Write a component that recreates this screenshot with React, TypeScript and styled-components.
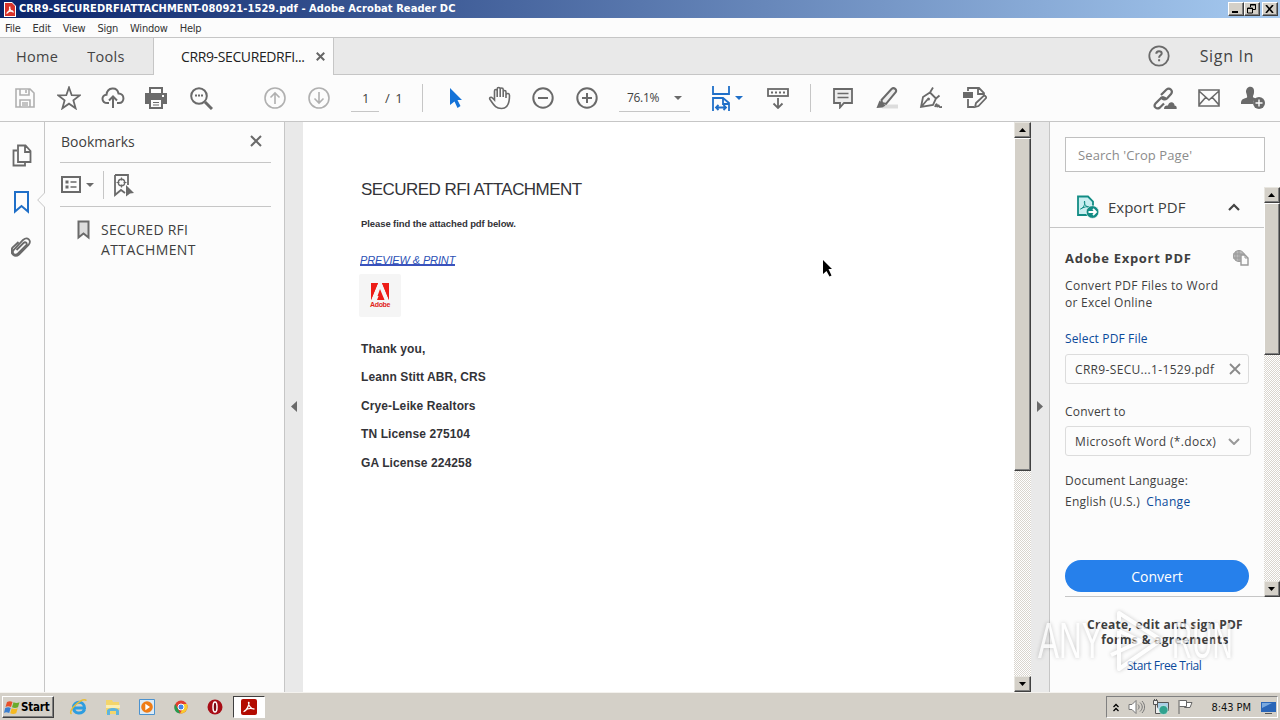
import React from "react";
import styled, { createGlobalStyle, css } from "styled-components";

const GlobalStyle = createGlobalStyle`
* { box-sizing: border-box; }
body {
  margin: 0;
  overflow: hidden;
  background: #fcfcfc;
  font-family: "Open Sans", "Noto Sans", sans-serif;
  color: #3f3f3f;
}
`

const Window = styled.div`
position: relative;
width: 1280px;
height: 720px;
display: flex;
flex-direction: column;
overflow: hidden;
svg { display: block; flex: none; }
`

const Label = styled.span<{ $spacing?: number }>`
letter-spacing: ${(p) => p.$spacing ?? 0}px;
white-space: nowrap;
`

/* title bar and menus */
const TitleBar = styled.header`
height: 18px;
flex: none;
display: flex;
align-items: center;
padding: 0 2px 0 4px;
background: linear-gradient(90deg, #0a246a, #a6caf0);
`
const WindowTitle = styled.h1`
margin: 0 auto 0 3px;
font: bold 11px/18px "DejaVu Sans Condensed", sans-serif;
color: #fff;
white-space: nowrap;
`
const raised = css`
background: #d4d0c8;
border: 1px solid;
border-color: #fff #404040 #404040 #fff;
box-shadow: inset -1px -1px #808080;
`
const WindowButton = styled.button<{ $gap?: boolean }>`
${raised}
width: 16px;
height: 14px;
padding: 0;
margin-left: ${(p) => (p.$gap ? 2 : 0)}px;
display: grid;
place-items: center;
`
const MenuBar = styled.nav`
height: 20px;
flex: none;
display: flex;
gap: 12px;
padding-left: 5px;
border-bottom: 1px solid #c6c6c6;
font: 11px/21px "DejaVu Sans Condensed", sans-serif;
color: #333;
`

/* tabs */
const TabBar = styled.div`
height: 37px;
flex: none;
display: flex;
background: #e9e9e9;
font-size: 14.5px;
line-height: 37px;
color: #444;
`
const TabLinks = styled.div`
width: 154px;
display: flex;
gap: 29px;
padding-left: 16px;
border-right: 1px solid #c6c6c6;
border-bottom: 1px solid #c6c6c6;
`
const ActiveTab = styled.div`
width: 179px;
display: flex;
align-items: center;
justify-content: space-between;
padding: 0 8px 0 27px;
background: #fcfcfc;
font-size: 14px;
color: #222;
`
const TabRest = styled.div`
flex: 1;
display: flex;
align-items: center;
justify-content: flex-end;
gap: 30px;
padding-right: 26px;
border-left: 1px solid #c6c6c6;
border-bottom: 1px solid #c6c6c6;
font-size: 16px;
`

/* toolbar */
const Toolbar = styled.div`
height: 47px;
flex: none;
display: flex;
align-items: center;
padding-left: 3px;
border-bottom: 1px solid #c6c6c6;
font-size: 13px;
`
const Tool = styled.div<{ $width?: number }>`
width: ${(p) => p.$width ?? 44}px;
flex: none;
display: flex;
align-items: center;
justify-content: center;
gap: 4px;
`
const Spacer = styled.div<{ $width: number }>`
width: ${(p) => p.$width}px;
flex: none;
`
const Field = styled.div<{ $width: number }>`
width: ${(p) => p.$width}px;
height: 28px;
display: flex;
align-items: center;
justify-content: space-between;
padding: 0 8px;
border-bottom: 1px solid #c6c6c6;
font-size: 12px;
`
const PageNumber = styled(Field)`
padding-left: 11px;
font-size: 13px;
`
const PageTotal = styled.span`
width: 27px;
padding-left: 6px;
font-size: 13px;
`
const Divider = styled.div`
width: 1px;
height: 28px;
background: #c6c6c6;
`

/* main area */
const Main = styled.main`
height: 570px;
flex: none;
display: flex;
`
const Rail = styled.aside`
position: relative;
width: 45px;
display: flex;
flex-direction: column;
align-items: center;
gap: 22px;
padding: 22px 0 0;
border-right: 1px solid #c6c6c6;
`
const RailNotch = styled.div`
position: absolute;
top: 70px;
right: -1px;
`
const BookmarkPanel = styled.section`
width: 240px;
padding: 0 13px 0 15px;
border-right: 1px solid #c6c6c6;
font-size: 14px;
`
const PanelHeader = styled.div`
height: 41px;
display: flex;
align-items: center;
justify-content: space-between;
padding: 0 9px 2px 1px;
border-bottom: 1px solid #c6c6c6;
`
const PanelTools = styled.div`
height: 44px;
display: flex;
align-items: center;
border-bottom: 1px solid #c6c6c6;
> :first-child { margin-left: 1px; }
> :nth-child(2) { margin: 0 9px 0 5px; }
> :nth-child(4) { margin-left: 8px; }
`
const BookmarkItem = styled.div`
display: flex;
gap: 11px;
padding: 13px 0 0 17px;
line-height: 20px;
> svg { margin-top: 0; }
`
const Splitter = styled.div`
width: 18px;
display: grid;
place-items: center;
padding-bottom: 2px;
background: #e9e9e9;
`
const Page = styled.article`
width: 711px;
padding: 57px 0 0 58px;
background: #fff;
font-family: "Liberation Sans", Arial, sans-serif;
color: #333338;
`
const PageTitle = styled.h2`
margin: 0;
font-size: 17px;
line-height: 22px;
font-weight: 400;
`
const PageNote = styled.p`
margin: 15px 0 0;
font-size: 9.5px;
line-height: 16px;
font-weight: 700;
`
const PageLink = styled.a`
display: block;
width: fit-content;
height: 12px;
margin: 22px 0 0 -1px;
font-size: 11px;
line-height: 12px;
font-style: italic;
color: #2b50b5;
border-bottom: 2px solid #3a52bd;
`
const AdobeTile = styled.div`
width: 42px;
height: 43px;
margin: 8px 0 0 -2px;
display: flex;
flex-direction: column;
align-items: center;
padding-top: 9px;
border-radius: 2px;
background: #f5f5f5;
font-size: 7px;
line-height: 9px;
font-weight: 700;
color: #e1251b;
`
const Signature = styled.div`
margin-top: 17.500px;
font-size: 12px;
font-weight: 700;
line-height: 28.5px;
`

/* classic scroll bars */
const ScrollTrack = styled.div<{ $width: number }>`
width: ${(p) => p.$width}px;
display: flex;
flex-direction: column;
background: repeating-conic-gradient(#fff 0 25%, #d9d5ce 0 50%) 0 0 / 2px 2px;
`
const ScrollButton = styled.div`
${raised}
height: 16px;
flex: none;
display: grid;
place-items: center;
border-color: #e8e6e0 #404040 #404040 #e8e6e0;
`
const ScrollThumb = styled.div<{ $height: number }>`
${raised}
height: ${(p) => p.$height}px;
margin-bottom: auto;
`

/* tool pane */
const ToolPane = styled.aside`
width: 231px;
border-left: 1px solid #c6c6c6;
`
const Search = styled.div`
width: 200px;
height: 35px;
margin: 15px 0 15px 15px;
padding-left: 12px;
border: 1px solid #c0c0c0;
background: #fff;
font-size: 13px;
line-height: 34px;
color: #8c8c8c;
`
const PaneScroll = styled.div`
height: 410px;
display: flex;
`
const PaneBody = styled.div`
width: 214px;
display: flex;
flex-direction: column;
`
const ExportHeader = styled.div`
height: 41px;
flex: none;
display: flex;
align-items: center;
padding: 0 24px 0 26px;
border-bottom: 1px solid #c6c6c6;
font-size: 15px;
> span { margin: 0 auto 0 9px; }
`
const ExportForm = styled.div`
flex: 1;
margin-left: 15px;
padding-top: 20px;
border-bottom: 1px solid #c6c6c6;
font-size: 12px;
line-height: 17px;
`
const ExportTitle = styled.h3`
margin: 0 15px 9px 0;
display: flex;
align-items: center;
justify-content: space-between;
font-size: 13px;
line-height: 20px;
`
const Line = styled.div<{ $top?: number }>`
margin-top: ${(p) => p.$top ?? 0}px;
white-space: nowrap;
`
const BlueLink = styled.a`
color: #0b4a9b;
`
const Input = styled.div<{ $width: number; $top: number }>`
width: ${(p) => p.$width}px;
height: 30px;
margin-top: ${(p) => p.$top}px;
padding: 0 7px 0 9px;
display: flex;
align-items: center;
justify-content: space-between;
border: 1px solid #dcdcdc;
border-radius: 3px;
`
const ConvertButton = styled.button`
display: block;
width: 184px;
height: 32px;
margin-top: 50px;
padding: 0;
border: 0;
border-radius: 16px;
background: #2680eb;
color: #fff;
font: 14px "Open Sans", sans-serif;
`
const Promo = styled.div`
padding: 20px 0 0;
font-size: 12px;
line-height: 15px;
text-align: center;
font-weight: 700;
> a { display: block; margin: 11px 2px 0 0; font-weight: 400; }
`

/* taskbar */
const Taskbar = styled.footer`
height: 28px;
flex: none;
display: flex;
align-items: center;
padding: 1px 2px 0;
border-top: 1px solid #f4f2ee;
background: #d4d0c8;
`
const StartButton = styled.button`
${raised}
width: 52px;
height: 22px;
padding: 0 0 0 1px;
display: flex;
align-items: center;
gap: 0;
font: bold 11.5px "DejaVu Sans Condensed", sans-serif;
letter-spacing: -.2px;
`
const QuickLaunch = styled.div`
display: flex;
align-items: center;
gap: 14px;
margin: 0 8px 0 15px;
`
const TaskButton = styled.div`
width: 32px;
height: 22px;
display: grid;
place-items: center;
background: #fff;
border: 1px solid;
border-color: #404040 #fff #fff #404040;
`
const Tray = styled.div`
width: 172px;
height: 22px;
margin-left: auto;
display: flex;
align-items: center;
padding: 0 1px 0 5px;
border: 1px solid;
border-color: #808080 #fff #fff #808080;
font: 11px "DejaVu Sans Condensed", sans-serif;
color: #111;
> svg + svg { margin-left: 8px; }
> span { margin: 0 10px 0 auto; }
`

/* things floating over the window */
const Pointer = styled.div`
position: absolute;
left: 822px;
top: 260px;
`
const Watermark = styled.div`
position: absolute;
left: 1038px;
top: 608px;
width: 196px;
height: 66px;
display: flex;
align-items: center;
justify-content: space-between;
opacity: .72;
filter: drop-shadow(0 0 2px rgba(0, 0, 0, .28));
font: 50px/66px "Liberation Sans", Arial, sans-serif;
color: #fff;
`
const MarkWord = styled.span<{ $scale: number }>`
display: block;
width: 62px;
white-space: nowrap;
transform: scaleX(${(p) => p.$scale});
transform-origin: 0 0;
`

type IconProps = {
  w?: number;
  h?: number;
  box?: string;
  color?: string;
  stroke?: number;
  children: React.ReactNode;
};

const Icon = ({ w = 24, h = w, box, color = "#6a6a6a", stroke = 1.8, children }: IconProps) => (
  <svg width={w} height={h} viewBox={box ?? `0 0 ${w} ${h}`} fill="none" stroke={color} strokeWidth={stroke}>
    {children}
  </svg>
);

const Caret = ({ color = "#6a6a6a" }: { color?: string }) => (
  <Icon w={8} h={4} stroke={0}>
    <path d="M0 0h8L4 4z" fill={color} />
  </Icon>
);

const Cross = ({ size, color, stroke }: { size: number; color?: string; stroke?: number }) => (
  <Icon w={size} box="0 0 12 12" color={color} stroke={stroke}>
    <path d="M1 1l10 10M11 1L1 11" />
  </Icon>
);

const Arrow = ({ down }: { down?: boolean }) => (
  <Icon w={8} h={4} stroke={0}>
    <path d={down ? "M0 0h7L3.5 4z" : "M0 4h7L3.5 0z"} fill="#000" />
  </Icon>
);

const Scrollbar = ({ width, thumb }: { width: number; thumb: number }) => (
  <ScrollTrack $width={width}>
    <ScrollButton><Arrow /></ScrollButton>
    <ScrollThumb $height={thumb} />
    <ScrollButton><Arrow down /></ScrollButton>
  </ScrollTrack>
);

const menus = ["File", "Edit", "View", "Sign", "Window", "Help"];
const signature = ["Thank you,", "Leann Stitt ABR, CRS", "Crye-Leike Realtors", "TN License 275104", "GA License 224258"];

const Header = () => (
  <>
    <TitleBar>
      <Icon w={12} h={15} stroke={0}>
        <path d="M0 0h8l4 4v11H0z" fill="#fff" />
        <path d="M1 1h7l3 3v10H1z" fill="#d9342b" />
        <path d="M2.500 11.500c2-1 3.500-4 3.300-7M5.500 5c.5 3 2 5 4.500 5M3 10.500c2-1.500 4-2 6-1.500" stroke="#fff" strokeWidth="1.200" fill="none" />
      </Icon>
      <WindowTitle><Label $spacing={0.08}>CRR9-SECUREDRFIATTACHMENT-080921-1529.pdf - Adobe Acrobat Reader DC</Label></WindowTitle>
      <WindowButton><Icon w={10} color="#000" stroke={2}><path d="M1 8h6" /></Icon></WindowButton>
      <WindowButton>
        <Icon w={10} color="#000" stroke={1}><path d="M3.500 3V.500h5v5H6M3 1h6M.500 4h5v5h-5zM1 4.500h5" /></Icon>
      </WindowButton>
      <WindowButton $gap><Icon w={10} h={8} color="#000" stroke={1.6}><path d="M1 0l7 8M8 0L1 8" /></Icon></WindowButton>
    </TitleBar>
    <MenuBar>{menus.map((m) => <Label key={m} $spacing={-0.23}>{m}</Label>)}</MenuBar>
    <TabBar>
      <TabLinks>
        <Label $spacing={0.3}>Home</Label>
        <Label $spacing={0.3}>Tools</Label>
      </TabLinks>
      <ActiveTab>
        <Label $spacing={-0.38}>CRR9-SECUREDRFI...</Label>
        <Cross size={9} stroke={2.6} color="#666" />
      </ActiveTab>
      <TabRest>
        <Icon w={22}>
          <circle cx="11" cy="11" r="9.700" />
          <path d="M8.300 8.800c0-3.600 5.400-3.300 5.400-.3 0 1.800-2.600 1.900-2.600 4.200M11.100 14.200v2" strokeWidth="2" />
        </Icon>
        <Label $spacing={0.65}>Sign In</Label>
      </TabRest>
    </TabBar>
  </>
);

const Tools = () => (
  <Toolbar>
    <Tool>
      <Icon w={22} color="#b0b0b0" stroke={1.6}>
        <path d="M2 2h14l4 4v14H2zM6 2v6h9V2M12 3v3M6 20v-7h10v7M8 16h6M8 18h6" />
      </Icon>
    </Tool>
    <Tool>
      <Icon><path d="M12 1.500l2.700 7.700 8 .2-6.300 5 2.200 7.900-6.600-4.600-6.600 4.600 2.200-7.900-6.300-5 8-.2z" /></Icon>
    </Tool>
    <Tool>
      <Icon stroke={2}>
        <path d="M8 17H6.500C0 17 0 9 5.500 8.700 6.500 1 16 .500 17.500 7.500c6.500 0 6.500 9.500.500 9.500h-2M12 22V10.500M8 14.500l4-4 4 4" />
      </Icon>
    </Tool>
    <Tool $width={42}>
      <Icon w={22} stroke={0}>
        <path d="M4 0h14v6H4zM0 6h22v11h-4v5H4v-5H0z" fill="#6a6a6a" />
        <path d="M6 2h10v4H6zM6 13h10v7H6z" fill="#fcfcfc" />
        <path d="M8 15h6v1H8zM8 17.500h6v1H8z" fill="#6a6a6a" />
        <path d="M17 8h2v2h-2z" fill="#fcfcfc" />
      </Icon>
    </Tool>
    <Tool $width={48}>
      <Icon stroke={2}>
        <circle cx="10" cy="10" r="7.800" />
        <path d="M16 16l7 7" strokeWidth="3" />
        <path d="M6 9.500h2M9 9.500h2M12 9.500h2" />
      </Icon>
    </Tool>
    <Spacer $width={28} />
    <Tool><Icon w={22} color="#b0b0b0" stroke={1.600}><circle cx="11" cy="11" r="10" /><path d="M11 17V6M6.500 10.500L11 6l4.500 4.500" /></Icon></Tool>
    <Tool><Icon w={22} color="#b0b0b0" stroke={1.600}><circle cx="11" cy="11" r="10" /><path d="M11 5v11M6.500 11.500L11 16l4.500-4.500" /></Icon></Tool>
    <Spacer $width={10} />
    <PageNumber $width={28}>1</PageNumber>
    <PageTotal><Label $spacing={1}>/ 1</Label></PageTotal>
    <Spacer $width={16} />
    <Divider />
    <Spacer $width={11} />
    <Tool><Icon w={14} h={20} stroke={0}><path d="M1 0l12 12H8.500l3 6-3 2-3-6.500L1 17z" fill="#1473d8" /></Icon></Tool>
    <Tool $width={42}>
      <Icon stroke={1.600}>
        <path d="M6.500 14V5c0-2 2.700-2 2.700 0v6V3c0-2 3-2 3 0v8-7.500c0-2 3-2 3 0V11 6c0-2 2.800-2 2.800 0v6-3c.3-2 3.500-2 3.500.5 0 7-1.500 13-8 13-5.500 0-7-2.500-11.500-9-1.200-2 1-3 2.500-1.500z" transform="translate(1 0)" />
      </Icon>
    </Tool>
    <Tool $width={45}><Icon w={22} stroke={2}><circle cx="11" cy="11" r="9.700" /><path d="M6 11h10" /></Icon></Tool>
    <Tool><Icon w={22} stroke={2}><circle cx="11" cy="11" r="9.700" /><path d="M6 11h10M11 6v10" /></Icon></Tool>
    <Spacer $width={10} />
    <Field $width={71}><Label $spacing={-0.3}>76.1%</Label><Caret /></Field>
    <Spacer $width={15} />
    <Tool>
      <Icon w={20} h={26} color="#1f6fc8" stroke={2}>
        <path d="M2 1v8h16V1M2 26V13h10l6 5v8M12 13v6h6M5 22.500h10M7.500 20L5 22.500 7.500 25M12.500 20l2.500 2.500-2.500 2.500" strokeWidth="1.800" />
      </Icon>
      <Caret color="#1f6fc8" />
    </Tool>
    <Spacer $width={7} />
    <Tool>
      <Icon h={22}>
        <rect x="2" y="2" width="20" height="7" />
        <path d="M5 5.500h14" strokeDasharray="2 2" />
        <path d="M12 11v10M7.500 16.500L12 21l4.500-4.500" />
      </Icon>
    </Tool>
    <Spacer $width={10} />
    <Divider />
    <Spacer $width={10} />
    <Tool>
      <Icon w={22}><path d="M2 2h18v14h-8l-4 4.500V16H2z" fill="#ededed" /><path d="M5.500 6.500h11M5.500 10.500h11" strokeWidth="1.400" /></Icon>
    </Tool>
    <Tool>
      <Icon w={24}>
        <path d="M10 18.500h13v4H7z" fill="#ddd" stroke="none" />
        <path d="M6.500 14L16.500 3c2.500-2.300 6 .8 4 3.500L11 18l-4-1z" fill="#eee" strokeWidth="2" />
        <path d="M4.500 14.500l6 5-3 2-6 .5z" fill="#6a6a6a" stroke="none" />
      </Icon>
    </Tool>
    <Tool>
      <Icon w={24}>
        <path d="M2 21l2-10 7-4.500 6 6L14 19zM11 6.500l3-5M17 12.500l3.500-3M2.500 20.500l6-7M16 21c1-3 2-4 2-1 0 2 1.500-2 2 0s1.500 1 3 1" />
        <circle cx="9.500" cy="13" r="1.500" fill="#6a6a6a" stroke="none" />
      </Icon>
    </Tool>
    <Tool $width={43}>
      <Icon w={24}>
        <path d="M5 5V2h11l5 5v3M15 2v6h6M5 13v8h6M12 21l1-4 8.500-8 2 2.500-8 8.500z" />
        <path d="M0 6h10v6H0z" fill="#6a6a6a" stroke="none" />
      </Icon>
    </Tool>
    <Spacer $width={145} />
    <Tool $width={46}>
      <Icon w={25} h={23} stroke={2.200}>
        <path d="M9 8l5.500-5.500c3-2.500 7 1.200 4.500 4.500l-4 4.500c-2 1.700-4.500 1-5.500-.5M14 12c-1-2-4-2.500-5.500-.5l-5 5c-2.500 3 1 6.500 4.500 4l4-4" />
        <path d="M12 22c0-3 2-4 4-3.500 1-5 7-3.500 6.500 0 2.500 0 2.500 3.500 2 3.500z" fill="#6a6a6a" stroke="none" />
      </Icon>
    </Tool>
    <Tool><Icon w={22} h={18} stroke={1.600}><path d="M1 1h20v16H1zM1 2l10 9L21 2M1 16l7-8M21 16l-7-8" /></Icon></Tool>
    <Tool>
      <Icon w={24} stroke={0}>
        <path d="M5 6c0-7 9-7 8 0 0 3-1 3-1 5 0 1 3 1 4 2-4 1-4 3-4 5H0c0-5 2-5 5-6 2-.5 1-2 0-6z" fill="#6a6a6a" />
        <circle cx="18" cy="17" r="6" fill="#6a6a6a" />
        <path d="M14.500 17h7M18 13.500v7" stroke="#fcfcfc" strokeWidth="1.400" />
      </Icon>
    </Tool>
  </Toolbar>
);

const Sidebar = () => (
  <>
    <Rail>
      <Icon w={20} h={24}>
        <path d="M6 1.500h7.500l5 5.500v11H6zM13 2v6h5.500M5 6.500H1.500v15H13V19" />
      </Icon>
      <Icon w={16} h={24} color="#1f6fc8" stroke={2}><path d="M1 2h13v19.500L7.500 16 1 21.500z" /></Icon>
      <Icon w={22} h={22}>
        <path d="M7 14l7-7c2-2 4.500.5 2.500 2.500l-8 8c-3.500 3-7-1-4-4l9-9.500c4.500-4 9 .5 5.500 5l-9.500 9.500c-4 3.500-10-1-6.500-7L9 6" transform="translate(-1.500 0)" />
      </Icon>
      <RailNotch>
        <Icon w={8} h={16} color="#c6c6c6" stroke={1}>
          <path d="M8 0v16L.7 8z" fill="#fcfcfc" stroke="none" />
          <path d="M7.500 0v1L.7 8l6.800 7v1" />
        </Icon>
      </RailNotch>
    </Rail>
    <BookmarkPanel>
      <PanelHeader>
        <Label>Bookmarks</Label>
        <Cross size={12} stroke={2} />
      </PanelHeader>
      <PanelTools>
        <Icon w={20} h={18} stroke={2}>
          <path d="M1 1h18v15H1z" />
          <path d="M4.500 6h3M4.500 11h3" strokeWidth="3" /><path d="M9.500 6h6M9.500 11h6" strokeWidth="1.500" />
        </Icon>
        <Caret />
        <Divider />
        <Icon w={22} h={24}>
          <path d="M3 2h13v10M3 2v20l6-5 4 3" />
          <circle cx="9.500" cy="9.500" r="3.200" strokeWidth="1.400" />
          <path d="M9.500 4.500v3M9.500 11.500v3M4.500 9.500h3M11.500 9.500h3" strokeWidth="1.200" />
          <path d="M14 12l8 8-4 .5-4 3z" fill="#6a6a6a" stroke="none" />
        </Icon>
      </PanelTools>
      <BookmarkItem>
        <Icon w={13} h={20} stroke={2}><path d="M1.500 1.500h10v16l-5-4-5 4z" fill="#ddd" /></Icon>
        <div>
          <Label $spacing={0.25}>SECURED RFI</Label><br />
          <Label $spacing={0.4}>ATTACHMENT</Label>
        </div>
      </BookmarkItem>
    </BookmarkPanel>
  </>
);

const Document = () => (
  <Page>
    <PageTitle><Label $spacing={-0.55}>SECURED RFI ATTACHMENT</Label></PageTitle>
    <PageNote><Label $spacing={-0.09}>Please find the attached pdf below.</Label></PageNote>
    <PageLink><Label $spacing={-0.13}>PREVIEW &amp; PRINT</Label></PageLink>
    <AdobeTile>
      <Icon w={18} h={17} stroke={0}>
        <path d="M0 0h18v17H0z" fill="#ed1c16" />
        <path d="M7 0h4l7 17h-5l-1.500-4H8l2-6-4 10H0z" fill="#f5f5f5" />
        <path d="M0 0h7L0 17zM11 0h7v17zM9 6l4.500 11h-3L9 13H6.500z" fill="#ed1c16" />
      </Icon>
      <Label $spacing={-0.4}>Adobe</Label>
    </AdobeTile>
    <Signature>
      {signature.map((line) => <div key={line}><Label $spacing={0.1}>{line}</Label></div>)}
    </Signature>
  </Page>
);

const ExportPane = () => (
  <ToolPane>
    <Search><Label $spacing={0.1}>Search 'Crop Page'</Label></Search>
    <PaneScroll>
      <PaneBody>
        <ExportHeader>
          <Icon w={23} h={24} color="#128c84" stroke={1.800}>
            <path d="M2 1.500h10l5 5V20H2z" fill="#c9eef0" />
            <path d="M4.500 14c3-1 5-5 4-8-1 4 3 7 6 6-3-1-7 0-10 2" strokeWidth="1" />
            <circle cx="16.500" cy="17" r="6.300" fill="#128c84" stroke="#fcfcfc" strokeWidth=".6" />
            <path d="M12.500 17h7M17 14l3 3-3 3" stroke="#fff" />
          </Icon>
          <Label>Export PDF</Label>
          <Icon w={12} h={8} stroke={2.200} color="#444"><path d="M1 7l5-5 5 5" /></Icon>
        </ExportHeader>
        <ExportForm>
          <ExportTitle>
            <Label $spacing={0.7}>Adobe Export PDF</Label>
            <Icon w={16} color="#999" stroke={1}>
              <circle cx="6" cy="6" r="5.500" fill="#bbb" />
              <path d="M0 4h12M0 8h12M6 0v12M3 1v10" />
              <path d="M8 5h4l3 3v7H8z" fill="#fcfcfc" strokeWidth="1.400" /><path d="M12 5v3h3" />
            </Icon>
          </ExportTitle>
          <Line><Label $spacing={0.32}>Convert PDF Files to Word</Label></Line>
          <Line><Label $spacing={0.25}>or Excel Online</Label></Line>
          <Line $top={19}><BlueLink><Label $spacing={0.15}>Select PDF File</Label></BlueLink></Line>
          <Input $width={184} $top={7}>
            <Label $spacing={0.33}>CRR9-SECU...1-1529.pdf</Label>
            <Cross size={12} color="#8a8a8a" stroke={1.800} />
          </Input>
          <Line $top={19}><Label $spacing={0.2}>Convert to</Label></Line>
          <Input $width={186} $top={6}>
            <Label $spacing={0.35}>Microsoft Word (*.docx)</Label>
            <Icon w={18} h={7} color="#999" stroke={2}><path d="M4 1l5 5 5-5" /></Icon>
          </Input>
          <Line $top={16}><Label $spacing={0.24}>Document Language:</Label></Line>
          <Line $top={4}><Label $spacing={0.25}>English (U.S.)</Label>&nbsp; <BlueLink><Label $spacing={0.35}>Change</Label></BlueLink></Line>
          <ConvertButton><Label>Convert</Label></ConvertButton>
        </ExportForm>
      </PaneBody>
      <Scrollbar width={16} thumb={152} />
    </PaneScroll>
    <Promo>
      <div><Label $spacing={0.27}>Create, edit and sign PDF</Label></div>
      <div><Label $spacing={0.3}>forms &amp; agreements</Label></div>
      <BlueLink><Label $spacing={-0.45}>Start Free Trial</Label></BlueLink>
    </Promo>
  </ToolPane>
);

const Desktop = () => (
  <Taskbar>
    <StartButton>
      <Icon w={17} h={16} stroke={0}>
        <path d="M3 3c2-1 4-1 5.500 0L7 8C5 7 3 7 1.500 8z" fill="#e8502a" />
        <path d="M9.500 3.300c2 1 4 1 6 0L14 8.300c-2 1-4 1-6 0z" fill="#6aab2d" />
        <path d="M1.200 9c2-1 4-1 5.500 0l-1.500 5c-2-1-4-1-5.200 0z" fill="#3b7fd0" />
        <path d="M7.700 9.300c2 1 4 1 6 0l-1.500 5c-2 1-4 1-6 0z" fill="#f5b921" />
      </Icon>
      Start
    </StartButton>
    <QuickLaunch>
      <Icon w={20} h={18} stroke={0}>
        <path d="M15.500 11.500c-2 5-11 5-11-2s11-7 11 .5H6" stroke="#2d9de0" strokeWidth="3" />
        <path d="M2.500 16C-2 13 13-1 17.500 2.500" stroke="#e8bd37" strokeWidth="1.500" />
      </Icon>
      <Icon w={20} h={18} stroke={0}>
        <path d="M3 2h6l1 2h6v12H3z" fill="#f3d56b" />
        <path d="M3 7h14v3H3z" fill="#fbeeb0" />
        <path d="M4 17v-4c0-4 12-4 12 0v4h-3v-4H7v4z" fill="#5fb4de" />
      </Icon>
      <Icon w={20} h={18} stroke={0}>
        <path d="M2.500 1.500h15v15h-15z" fill="#dcebf7" stroke="#4b92cf" strokeWidth="1" />
        <circle cx="10" cy="9" r="5.800" fill="#ef7c16" />
        <path d="M8.300 5.800L13 9l-4.700 3.200z" fill="#fff" />
      </Icon>
      <Icon w={20} h={18} stroke={0}>
        <circle cx="10" cy="9" r="6.500" fill="#e13e30" />
        <path d="M4.200 6L8 13l1 2.500C3 15 2.500 9 4.200 6z" fill="#249c50" />
        <path d="M10 6h6c2 5-2 10-7 9.500l3.500-6z" fill="#f8cb2e" />
        <circle cx="10" cy="9" r="3" fill="#4285e8" stroke="#fff" strokeWidth="1" />
      </Icon>
      <Icon w={20} h={18} stroke={0}>
        <circle cx="10" cy="9" r="7.500" fill="#a80d16" />
        <ellipse cx="10" cy="9" rx="2" ry="5" fill="#7c0710" stroke="#fff" strokeWidth="1.500" />
      </Icon>
    </QuickLaunch>
    <TaskButton>
      <Icon w={16} stroke={0}>
        <rect width="16" height="16" rx="2" fill="#b30b00" />
        <path
          d="M3 12.500c2.500-1 5-5.500 5-9M7.500 3.500c0 3 2.500 6.500 5.500 6.500M3.500 12c2.500-2.500 6-3.300 9.500-2"
          stroke="#fff"
          strokeWidth="1.300"
          strokeLinecap="round"
        />
      </Icon>
    </TaskButton>
    <Tray>
      <Icon w={8} h={9} color="#000" stroke={1.300}><path d="M1.500 4L4 1.500 6.500 4M1.500 8L4 5.500 6.500 8" /></Icon>
      <Icon w={17} h={16} color="#777" stroke={1}>
        <path d="M1 5.500h3l4-4v13l-4-4H1z" fill="#fff" />
        <path d="M10 5.500c1.500 1.500 1.500 3.500 0 5M12 3.500c3 3 3 6 0 9M14 2c3.500 4 3.500 8 0 12" />
      </Icon>
      <Icon w={16} stroke={1} color="#555">
        <path d="M4.500 3.500h11v8h-11z" fill="#a9cfe6" />
        <path d="M.5 1.500h4v4h-4zM2.500 5.500v9H8M1.500 0v2M3.500 0v2" fill="#eee" />
        <circle cx="10.500" cy="11" r="4.500" fill="#31a28f" stroke="#fff" strokeWidth=".5" />
      </Icon>
      <Icon w={16} color="#666" stroke={1}>
        <path d="M2 1v14M2.500 1.500h7v6h-7M9.500 3.500H15l-2 5H7.500v-1" fill="#fff" />
      </Icon>
      <Label $spacing={-0.05}>8:43 PM</Label>
      <Icon w={15} h={13} stroke={0}>
        <path d="M0 1h15v10H0z" fill="#2a66b8" />
        <path d="M1 2h10L1 7z" fill="#79a9df" />
        <path d="M4 12h7v1H4z" fill="#555" />
      </Icon>
    </Tray>
  </Taskbar>
);

const App = () => (
  <Window>
    <GlobalStyle />
    <Header />
    <Tools />
    <Main>
      <Sidebar />
      <Splitter><Icon w={6} h={11} stroke={0}><path d="M6 0v11L0 5.500z" fill="#6a6a6a" /></Icon></Splitter>
      <Document />
      <Scrollbar width={17} thumb={333} />
      <Splitter><Icon w={6} h={11} stroke={0}><path d="M0 0v11l6-5.500z" fill="#6a6a6a" /></Icon></Splitter>
      <ExportPane />
    </Main>
    <Desktop />
    <Pointer>
      <Icon w={10} h={18} stroke={0}><path d="M1 0l9 9H6.500l3 6.500-2 1L4.500 11 1 14z" fill="#000" /></Icon>
    </Pointer>
    <Watermark>
      <MarkWord $scale={0.63}>ANY</MarkWord>
      <Icon w={58} h={64} color="#fff" stroke={4}>
        <path d="M12 12V4l42 27L12 60V22M12 22l22 10-30 14" strokeLinejoin="round" />
      </Icon>
      <MarkWord $scale={0.56}>RUN</MarkWord>
    </Watermark>
  </Window>
);

export default App;
